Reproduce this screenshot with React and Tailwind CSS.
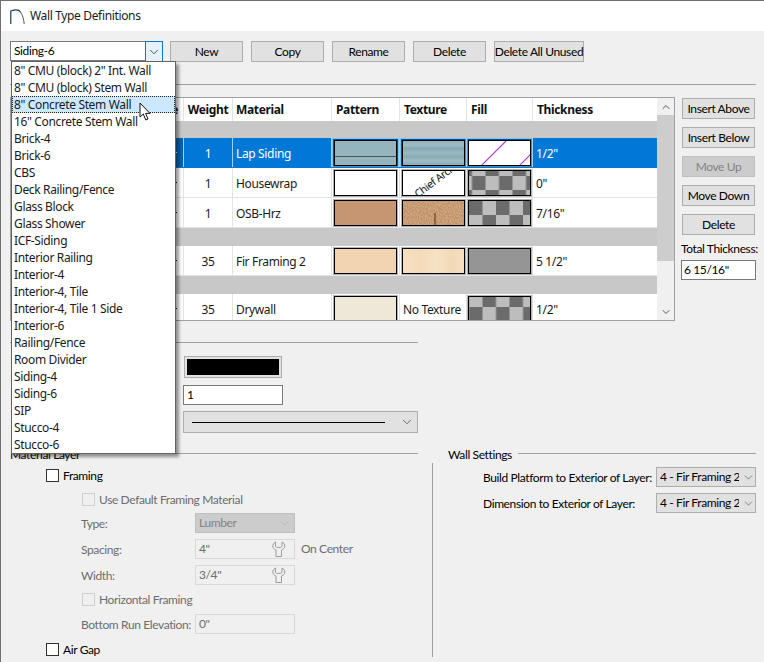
import React from "react";
import { ChevronDown, ChevronUp } from "lucide-react";

const noto = "font-['Noto_Sans',sans-serif] text-[12px] tracking-[-0.35px]";
const formFont = "font-['Lato',sans-serif] text-[12px] leading-[16px] tracking-[-0.38px]";

const wallTypes = [
  '8" CMU (block) 2" Int. Wall',
  '8" CMU (block) Stem Wall',
  '8" Concrete Stem Wall',
  '16" Concrete Stem Wall',
  "Brick-4",
  "Brick-6",
  "CBS",
  "Deck Railing/Fence",
  "Glass Block",
  "Glass Shower",
  "ICF-Siding",
  "Interior Railing",
  "Interior-4",
  "Interior-4, Tile",
  "Interior-4, Tile 1 Side",
  "Interior-6",
  "Railing/Fence",
  "Room Divider",
  "Siding-4",
  "Siding-6",
  "SIP",
  "Stucco-4",
  "Stucco-6",
];

function Button({ children, className = "", disabled }) {
  return (
    <div
      className={
        "h-[21px] flex items-center justify-center border whitespace-nowrap " +
        (disabled ? "bg-[#cccccc] border-[#bfbfbf] text-[#838383] " : "bg-[#e1e1e1] border-[#adadad] text-black ") +
        className
      }
    >
      {children}
    </div>
  );
}

function Checker({ id, dx = 0, dy = 0 }) {
  return (
    <svg className="w-full h-full block" aria-hidden="true">
      <defs>
        <pattern id={id} x={dx} y={dy} width="27" height="28" patternUnits="userSpaceOnUse">
          <rect width="27" height="28" fill="#bdbdbd" />
          <rect width="13.5" height="14" fill="#6b6b6b" />
          <rect x="13.5" y="14" width="13.5" height="14" fill="#6b6b6b" />
        </pattern>
      </defs>
      <rect width="100%" height="100%" fill={`url(#${id})`} />
    </svg>
  );
}

function Swatch({ children, className = "", selected }) {
  return (
    <div className={"h-full w-full flex items-center justify-center " + (selected ? "border border-[#7cc4f5]" : "")}>
      <div className={"w-[63px] h-[26px] border border-black outline outline-1 outline-[rgba(0,0,0,0.3)] overflow-hidden shrink-0 " + className}>{children}</div>
    </div>
  );
}

function Cell({ w, children, className = "", selected }) {
  return (
    <div
      className={
        "h-full shrink-0 flex items-center border-r " +
        (selected ? "border-[#9fd0f2] " : "border-[#e3e3e3] ") +
        w +
        " " +
        className
      }
    >
      {children}
    </div>
  );
}

function Row({ weight, material, pattern, texture, fill, thickness, selected }) {
  return (
    <div
      className={
        "h-[30px] shrink-0 flex border-b " +
        (selected ? "bg-[#0078d7] text-white border-[#0078d7]" : "bg-white text-[#1a1a1a] border-[#e3e3e3]")
      }
    >
      <Cell w="w-[173px]" selected={selected} className={"justify-end pr-[6px] " + (selected ? "bg-[#0063b1]" : "")}>
        <span className={"w-[3px] h-px " + (selected ? "bg-white" : "bg-black")} />
      </Cell>
      <Cell w="w-[49px]" selected={selected} className="justify-center"><span className="mt-[2px]">{weight}</span></Cell>
      <Cell w="w-[99px]" selected={selected} className="pl-[3px]"><span className="mt-[2px]">{material}</span></Cell>
      <Cell w="w-[68px]" selected={selected}>{pattern}</Cell>
      <Cell w="w-[67px]" selected={selected}>{texture}</Cell>
      <Cell w="w-[66px]" selected={selected}>{fill}</Cell>
      <div className="pl-[3px] flex items-center"><span className="mt-[2px]">{thickness}</span></div>
    </div>
  );
}

function HeadCell({ w, children, className = "" }) {
  return <div className={"h-full shrink-0 flex items-center border-r border-[#e3e3e3] font-bold " + w + " " + className}>{children}</div>;
}

function Group() {
  return <div className="h-[18px] shrink-0 bg-[#c8c8c8]" />;
}

function CheckRow({ children, disabled, className = "", indent }) {
  return (
    <div className={"flex items-center h-[13px] " + indent + " " + className}>
      <span className={"w-[13px] h-[13px] border shrink-0 " + (disabled ? "border-[#cfcfcf] bg-[#f0f0f0]" : "border-[#333333] bg-white")} />
      <span className={"ml-[4px] " + (disabled ? "text-[#6d6d6d]" : "text-black")}>{children}</span>
    </div>
  );
}

function WrenchIcon() {
  return (
    <svg width="14" height="16" viewBox="0 0 14 16" fill="none" stroke="#9a9a9a" strokeWidth="1" aria-hidden="true">
      <path d="M3.5 1 C1.5 2 .8 3.5 .8 5 C.8 7 2 8.2 4 9 V15.5 H9.5 V9 C11.5 8.2 12.8 7 12.8 5 C12.8 3.5 12 2 10 1 V5 C10 6 9 6.5 6.8 6.5 C4.5 6.5 3.5 6 3.5 5 Z" />
    </svg>
  );
}

function DisabledField({ value, wrench }) {
  return (
    <div className="w-[100px] h-[20px] border border-[#d9d9d9] bg-[#f0f0f0] flex items-center justify-between pl-[3px] pr-[8px] text-[#6d6d6d]">
      <span>{value}</span>
      {wrench && <WrenchIcon />}
    </div>
  );
}

function FormRow({ label, children, after, className = "" }) {
  return (
    <div className={"flex items-center h-[20px] pl-[71px] text-[#6d6d6d] " + className}>
      <span className="w-[114px] shrink-0 whitespace-nowrap pt-[2px]">{label}</span>
      {children}
      {after && <span className="ml-[6px]">{after}</span>}
    </div>
  );
}

function LayerSelect({ label }) {
  return (
    <div className="flex items-center h-[20px] pl-[50px] text-black">
      <span className="w-[173px] shrink-0 whitespace-nowrap pt-[2px]">{label}</span>
      <div className="w-[100px] h-[20px] border border-[#adadad] bg-[#e1e1e1] flex items-center pl-[3px] overflow-hidden">
        <span className="w-[79px] shrink-0 overflow-hidden whitespace-nowrap">4 - Fir Framing 2</span>
        <ChevronDown size={13} strokeWidth={1.2} className="ml-[3px] text-[#555555] shrink-0" />
      </div>
    </div>
  );
}

export default function App() {
  return (
    <div className={"relative w-[764px] h-[662px] overflow-hidden bg-[#f0f0f0] border-t border-l border-[#707070] " + formFont}>
      {/* title bar */}
      <div className="h-[30px] bg-white flex items-center pl-[9px]">
        <svg width="15" height="15" viewBox="0 0 15 15" fill="none" aria-hidden="true">
          <path d="M.8 15 V2 C5 .4 9 .6 10.5 3" stroke="#1d3a5c" strokeWidth="1.2" />
          <path d="M10.5 3 C12.5 6 13.8 10 14.2 15" stroke="#555555" strokeWidth="1" />
        </svg>
        <span className={"ml-[5px] text-[#1a1a1a] " + noto}>Wall Type Definitions</span>
      </div>

      {/* type picker and actions */}
      <div className="mt-[10px] ml-[9px] flex h-[21px]">
        <div className="w-[153px] h-[20px] bg-white border border-[#7a7a7a] flex items-center pl-[3px] relative">
          <span className="text-black">Siding-6</span>
        </div>
        <Button className="w-[73px] ml-[7px]">New</Button>
        <Button className="w-[73px] ml-[8px]">Copy</Button>
        <Button className="w-[73px] ml-[8px]">Rename</Button>
        <Button className="w-[73px] ml-[8px]">Delete</Button>
        <Button className="w-[90px] ml-[8px]">Delete All Unused</Button>
      </div>

      <div className="mt-[22px] ml-[9px] w-[746px] h-px bg-[#a0a0a0]" />

      {/* layers table */}
      <div className="mt-[12px] ml-[9px] flex">
        <div className={"w-[665px] h-[224px] border border-[#a0a0a0] flex bg-white overflow-hidden " + noto}>
          <div className="w-[646px] shrink-0 flex flex-col text-[#111111]">
            <div className="h-[23px] shrink-0 flex">
              <HeadCell w="w-[173px]" className="justify-end pr-[5px]">Line Style</HeadCell>
              <HeadCell w="w-[49px]" className="justify-center">Weight</HeadCell>
              <HeadCell w="w-[99px]" className="pl-[3px]">Material</HeadCell>
              <HeadCell w="w-[68px]" className="pl-[4px]">Pattern</HeadCell>
              <HeadCell w="w-[67px]" className="pl-[4px]">Texture</HeadCell>
              <HeadCell w="w-[66px]" className="pl-[4px]">Fill</HeadCell>
              <div className="flex items-center pl-[4px] font-bold">Thickness</div>
            </div>
            <div className="h-[17px] shrink-0 bg-[#c8c8c8]" />
            <Row
              selected
              weight="1"
              material="Lap Siding"
              thickness={'1/2"'}
              pattern={
                <Swatch selected className="bg-[#94b4be] flex flex-col">
                  <div className="h-[15px] shrink-0" />
                  <div className="h-px bg-[#47555c] shrink-0" />
                </Swatch>
              }
              texture={
                <Swatch selected className="bg-[linear-gradient(180deg,#8fb0bb_0%,#9dbbc5_18%,#86a8b4_30%,#9ab9c3_50%,#8aabb6_66%,#9dbbc5_82%,#8aabb6_100%)]" />
              }
              fill={
                <Swatch selected className="bg-white">
                  <svg className="w-full h-full block" viewBox="0 0 61 24" aria-hidden="true">
                    <path d="M12 25 L37 0 M50 25 L63 12" stroke="#b030e0" strokeWidth="1.1" fill="none" />
                  </svg>
                </Swatch>
              }
            />
            <Row
              weight="1"
              material="Housewrap"
              thickness={'0"'}
              pattern={<Swatch className="bg-white" />}
              texture={
                <Swatch className="bg-white">
                  <svg className="w-full h-full block" viewBox="0 0 61 24" aria-hidden="true">
                    <text x="15" y="27" transform="rotate(-37 15 27)" fontSize="10.5" fill="#111111" fontFamily="Noto Sans, sans-serif">Chief Archi</text>
                  </svg>
                </Swatch>
              }
              fill={<Swatch><Checker id="c1" dx={-10.5} dy={-9} /></Swatch>}
            />
            <Row
              weight="1"
              material="OSB-Hrz"
              thickness={'7/16"'}
              pattern={<Swatch className="bg-[#c69673]" />}
              texture={
                <Swatch className="bg-[#bd8a62]">
                  <svg className="w-full h-full block" viewBox="0 0 61 24" aria-hidden="true">
                    <filter id="osb" x="0" y="0" width="100%" height="100%">
                      <feTurbulence type="fractalNoise" baseFrequency="0.9" numOctaves="2" seed="4" />
                      <feColorMatrix values="0 0 0 0 .48  0 0 0 0 .27  0 0 0 0 .13  2.4 0 0 0 -.7" />
                    </filter>
                    <rect width="61" height="24" fill="#d7ab85" />
                    <rect width="61" height="24" filter="url(#osb)" />
                    <path d="M32 12 V24" stroke="#5a2e14" strokeWidth="1" />
                  </svg>
                </Swatch>
              }
              fill={<Swatch><Checker id="c2" dx={0} dy={0} /></Swatch>}
            />
            <Group />
            <Row
              weight="35"
              material="Fir Framing 2"
              thickness={'5 1/2"'}
              pattern={<Swatch className="bg-[#f2d4b0]" />}
              texture={<Swatch className="bg-[linear-gradient(90deg,#f6e0c0_0%,#f3dbb8_30%,#f6e2c4_55%,#f2d9b6_80%,#f5dfbf_100%)]" />}
              fill={<Swatch className="bg-[#959595]" />}
            />
            <Group />
            <Row
              weight="35"
              material="Drywall"
              thickness={'1/2"'}
              pattern={<Swatch className="bg-[#efe8d8]" />}
              texture={<span className="pl-[3px] mt-[2px]">No Texture</span>}
              fill={<Swatch><Checker id="c3" dx={13.5} dy={-4} /></Swatch>}
            />
          </div>
          {/* scrollbar */}
          <div className="w-[17px] shrink-0 bg-[#f0f0f0] flex flex-col items-center">
            <div className="h-[17px] flex items-center justify-center"><ChevronUp size={12} strokeWidth={2} className="text-[#555555]" /></div>
            <div className="w-full h-[146px] bg-[#cdcdcd]" />
            <div className="mt-auto h-[17px] flex items-center justify-center"><ChevronDown size={12} strokeWidth={2} className="text-[#555555]" /></div>
          </div>
        </div>

        {/* layer actions */}
        <div className="ml-[6px] w-[75px] flex flex-col pt-px">
          <Button className="w-[73px] ml-px">Insert Above</Button>
          <Button className="w-[73px] ml-px mt-[8px]">Insert Below</Button>
          <Button disabled className="w-[73px] ml-px mt-[8px]">Move Up</Button>
          <Button className="w-[73px] ml-px mt-[8px]">Move Down</Button>
          <Button className="w-[73px] ml-px mt-[8px]">Delete</Button>
          <div className="mt-[6px] text-black whitespace-nowrap">Total Thickness:</div>
          <div className="mt-[3px] h-[20px] bg-white border border-[#7a7a7a] flex items-center pl-[2px] text-black">{'6 15/16"'}</div>
        </div>
      </div>

      {/* line style */}
      <div className="w-[408px] ml-[9px]">
        <div className="mt-[21px] h-px bg-[#a0a0a0]" />
        <div className="pl-[173px]">
          <div className="mt-[13px] ml-px w-[98px] h-[22px] bg-[#e1e1e1] border border-[#adadad] p-[2px]">
            <div className="w-full h-full bg-black" />
          </div>
          <div className="mt-[7px] w-[100px] h-[20px] bg-white border border-[#7a7a7a] flex items-center pl-[3px] text-black">1</div>
          <div className="mt-[6px] h-[22px] bg-[#e1e1e1] border border-[#adadad] flex items-center pl-[8px] pr-[3px]">
            <div className="w-[193px] h-px bg-black" />
            <ChevronDown size={14} strokeWidth={1.3} className="ml-auto text-[#444444]" />
          </div>
        </div>
      </div>

      {/* material layer and wall settings */}
      <div className="mt-[14px] ml-[9px] flex">
        <div className="w-[408px]">
          <div className="h-[16px] flex items-center text-black">
            <span className="whitespace-nowrap">Material Layer</span>
            <div className="flex-1 h-px bg-[#a0a0a0] mb-[4px] ml-[6px]" />
          </div>
          <CheckRow indent="ml-[36px]" className="mt-[6px]">Framing</CheckRow>
          <CheckRow disabled indent="ml-[72px]" className="mt-[11px]">Use Default Framing Material</CheckRow>
          <FormRow label="Type:" className="mt-[7px]">
            <div className="w-[100px] h-[20px] bg-[#cccccc] border border-[#bfbfbf] flex items-center pl-[3px] pr-[3px] text-[#838383]">
              Lumber
              <ChevronDown size={13} strokeWidth={1.2} className="ml-auto text-[#a8a8a8]" />
            </div>
          </FormRow>
          <FormRow label="Spacing:" after="On Center" className="mt-[6px]"><DisabledField value={'4"'} wrench /></FormRow>
          <FormRow label="Width:" className="mt-[6px]"><DisabledField value={'3/4"'} wrench /></FormRow>
          <CheckRow disabled indent="ml-[72px]" className="mt-[8px]">Horizontal Framing</CheckRow>
          <FormRow label="Bottom Run Elevation:" className="mt-[8px]"><DisabledField value={'0"'} /></FormRow>
          <CheckRow indent="ml-[36px]" className="mt-[9px]">Air Gap</CheckRow>
        </div>
        <div className="ml-[14px] w-[324px]">
          <div className="h-[16px] flex items-center pl-[16px] text-black">
            <span className="whitespace-nowrap">Wall Settings</span>
            <div className="flex-1 h-px bg-[#a0a0a0] mb-[4px] ml-[6px]" />
          </div>
          <div className="h-[194px] border-l border-[#a0a0a0] pt-[4px] flex flex-col gap-[6px]">
            <LayerSelect label="Build Platform to Exterior of Layer:" />
            <LayerSelect label="Dimension to Exterior of Layer:" />
          </div>
        </div>
      </div>

      {/* open dropdown lies over the page */}
      <div className="absolute left-[144px] top-[40px] w-[18px] h-[21px] z-10 bg-[#e5f1fb] border border-[#0078d7] flex items-center justify-center">
        <ChevronDown size={14} strokeWidth={1.3} className="text-[#222222]" />
      </div>
      <div className={"absolute left-[10px] top-[60px] w-[165px] z-20 bg-white border border-[#646464] shadow-[3px_3px_3px_rgba(0,0,0,0.4)] text-[#1a1a1a] " + noto}>
        {wallTypes.map((name, i) => (
          <div
            key={name}
            className={
              "h-[17px] flex items-center pl-[2px] whitespace-nowrap " +
              (i === 2 ? "bg-[#cce8ff] outline-dotted outline-1 -outline-offset-1 outline-[#222222]" : "")
            }
          >
            {name}
          </div>
        ))}
      </div>

      {/* mouse pointer */}
      <svg className="absolute left-[138px] top-[101px] z-30" width="13" height="20" viewBox="0 0 13 20" aria-hidden="true">
        <path d="M1 1 V15 L4.3 12 L6.8 18 L9 17 L6.6 11.4 H11 Z" fill="#ffffff" stroke="#111111" strokeWidth="1" />
      </svg>
    </div>
  );
}
